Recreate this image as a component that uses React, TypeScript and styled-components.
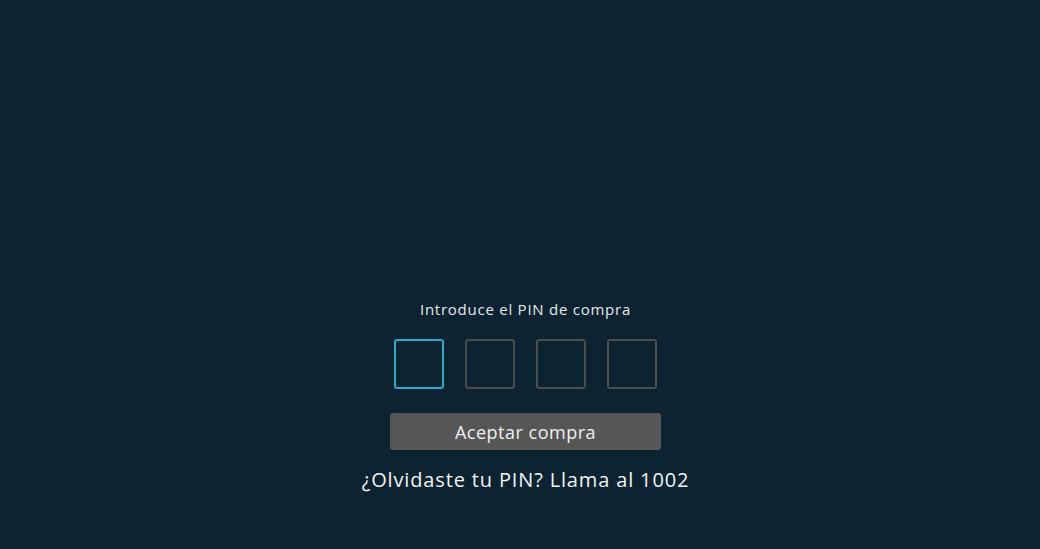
import React, { useState } from 'react'
import styled, { createGlobalStyle } from 'styled-components';

const GlobalStyle = createGlobalStyle`
    html, body {
        margin: 0;
        padding: 0;
        background-color: #0c2331;
        font-family: "Open Sans", "Liberation Sans", sans-serif;
    }
`;

const Page = styled.div`
    width: 100%;
    height: 549px;
    background-color: #0c2331;
    display: flex;
    flex-direction: column;
    align-items: center;
    padding-top: 298px;
    padding-left: 11px;
    box-sizing: border-box;
`;

const Title = styled.p`
    margin: 0;
    color: #e6e9ea;
    font-size: 15px;
    font-weight: 500;
    line-height: 22px;
    letter-spacing: 0.75px;
`;

const PinRow = styled.div`
    display: flex;
    gap: 21px;
    margin-top: 19px;
`;

const PinBox = styled.div<{ $active?: boolean }>`
    width: 50px;
    height: 50px;
    box-sizing: border-box;
    border: 2px solid ${(p) => (p.$active ? '#2ba9c9' : '#4a4c4d')};
    border-radius: 3px;
`;

const Button = styled.button`
    margin-top: 24px;
    width: 271px;
    height: 37px;
    border: none;
    border-radius: 3px;
    background-color: #565656;
    color: #f0f0f0;
    font: inherit;
    font-size: 18px;
    font-weight: 500;
    letter-spacing: 0.5px;
    cursor: pointer;
`;

const Help = styled.p`
    margin: 16px 0 0;
    color: #f2f4f5;
    font-size: 20px;
    font-weight: 500;
    line-height: 28px;
    letter-spacing: 0.85px;
`;

export default function App() {
    const [active] = useState(0);

    return (
        <>
            <GlobalStyle />
            <Page>
                <Title>Introduce el PIN de compra</Title>
                <PinRow>
                    {[0, 1, 2, 3].map((i) => (
                        <PinBox key={i} $active={i === active} />
                    ))}
                </PinRow>
                <Button type="button">Aceptar compra</Button>
                <Help>¿Olvidaste tu PIN? Llama al 1002</Help>
            </Page>
        </>
    )
}
